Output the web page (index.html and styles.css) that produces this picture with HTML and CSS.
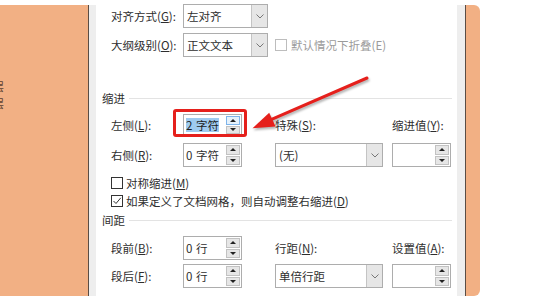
FILE: index.html
```html
<!DOCTYPE html>
<html lang="zh-CN">
<head>
<meta charset="utf-8">
<title>段落</title>
<link rel="stylesheet" href="styles.css">
</head>
<body>
<div class="screen">
  <div class="panel-left">
    <div class="doc-line">层</div>
    <div class="doc-line">层</div>
  </div>
  <div class="edge"></div>
  <div class="frame"></div>
  <div class="dialog">
    <div class="grid grid-top">
      <div class="label">对齐方式(<u>G</u>):</div>
      <div class="combo combo-short"><span class="combo-val">左对齐</span><span class="combo-btn"><svg width="8" height="5" viewBox="0 0 8 5"><polyline points="0.5,0.5 4,4 7.5,0.5" fill="none" stroke="#777" stroke-width="1"/></svg></span></div>
      <div></div><div></div>
      <div class="label">大纲级别(<u>O</u>):</div>
      <div class="combo combo-short"><span class="combo-val">正文文本</span><span class="combo-btn"><svg width="8" height="5" viewBox="0 0 8 5"><polyline points="0.5,0.5 4,4 7.5,0.5" fill="none" stroke="#777" stroke-width="1"/></svg></span></div>
      <div class="check-row span-2 disabled"><span class="check"></span><span>默认情况下折叠(E)</span></div>
    </div>

    <div class="section-head head-indent"><span>缩进</span></div>

    <div class="grid grid-indent">
      <div class="label">左侧(<u>L</u>):</div>
      <div class="spin">
        <span class="spin-val"><span class="selected">2 字符</span></span>
        <span class="spin-btns"><span class="sb sb-active"><i class="tri-up"></i></span><span class="sb"><i class="tri-down"></i></span></span>
        <span class="mark-box"></span>
      </div>
      <div class="label">特殊(<u>S</u>):</div>
      <div class="label">缩进值(<u>Y</u>):</div>

      <div class="label">右侧(<u>R</u>):</div>
      <div class="spin">
        <span class="spin-val">0 字符</span>
        <span class="spin-btns"><span class="sb"><i class="tri-up"></i></span><span class="sb"><i class="tri-down"></i></span></span>
      </div>
      <div class="combo combo-wide"><span class="combo-val">(无)</span><span class="combo-btn"><svg width="8" height="5" viewBox="0 0 8 5"><polyline points="0.5,0.5 4,4 7.5,0.5" fill="none" stroke="#777" stroke-width="1"/></svg></span></div>
      <div class="spin">
        <span class="spin-val"></span>
        <span class="spin-btns"><span class="sb"><i class="tri-up"></i></span><span class="sb"><i class="tri-down"></i></span></span>
      </div>

      <div class="check-row span-all row-mirror"><span class="check"></span><span>对称缩进(<u>M</u>)</span></div>
      <div class="check-row span-all row-grid"><span class="check"><svg width="10" height="10" viewBox="0 0 10 10"><polyline points="1.5,5 4,7.5 8.8,1.8" fill="none" stroke="#333" stroke-width="1"/></svg></span><span>如果定义了文档网格，则自动调整右缩进(<u>D</u>)</span></div>
    </div>

    <div class="section-head head-spacing"><span>间距</span></div>

    <div class="grid grid-spacing">
      <div class="label">段前(<u>B</u>):</div>
      <div class="spin">
        <span class="spin-val">0 行</span>
        <span class="spin-btns"><span class="sb"><i class="tri-up"></i></span><span class="sb"><i class="tri-down"></i></span></span>
      </div>
      <div class="label">行距(<u>N</u>):</div>
      <div class="label">设置值(<u>A</u>):</div>

      <div class="label">段后(<u>F</u>):</div>
      <div class="spin">
        <span class="spin-val">0 行</span>
        <span class="spin-btns"><span class="sb"><i class="tri-up"></i></span><span class="sb"><i class="tri-down"></i></span></span>
      </div>
      <div class="combo combo-wide"><span class="combo-val">单倍行距</span><span class="combo-btn"><svg width="8" height="5" viewBox="0 0 8 5"><polyline points="0.5,0.5 4,4 7.5,0.5" fill="none" stroke="#777" stroke-width="1"/></svg></span></div>
      <div class="spin">
        <span class="spin-val"></span>
        <span class="spin-btns"><span class="sb"><i class="tri-up"></i></span><span class="sb"><i class="tri-down"></i></span></span>
      </div>
    </div>
  </div>
  <div class="frame frame-right"></div>
  <div class="edge"></div>
  <div class="panel-right"></div>
</div>

<svg class="arrow" width="554" height="300" viewBox="0 0 554 300">
  <line x1="271" y1="119.6" x2="367" y2="78" stroke="#e5201c" stroke-width="3" stroke-linecap="round"/>
  <polygon points="252.5,128.3 269.2,112.8 275.6,126.6" fill="#e5201c"/>
</svg>
</body>
</html>
```

FILE: styles.css
```css
html, body {
  margin: 0;
  padding: 0;
}

body {
  width: 554px;
  height: 300px;
  overflow: hidden;
  background: #ffffff;
  font-family: "Noto Sans CJK SC", "Microsoft YaHei", "Liberation Sans", sans-serif;
  font-size: 11.5px;
  color: #2e2e2e;
  position: relative;
}

u {
  text-decoration: underline;
  text-underline-offset: 1px;
}

.screen {
  display: flex;
  height: 300px;
}

.panel-left {
  width: 88px;
  margin: 5px 0 4px;
  background: #f2b084;
  overflow: hidden;
  padding-top: 73px;
  box-sizing: border-box;
}

.doc-line {
  margin-left: -7px;
  font-size: 11px;
  line-height: 17px;
  color: #5c3f2f;
}

.edge {
  width: 1px;
  margin: 5px 0 4px;
  background: #5a4d45;
}

.frame {
  width: 7px;
  margin: 5px 0 4px;
  background: #eeeeee;
}

.frame-right {
  width: 8px;
}

.panel-right {
  width: 14px;
  margin: 5px 0 4px;
  background: #f2b084;
  border-radius: 0 6px 6px 0;
}

.dialog {
  width: 361px;
  padding: 4px 0 0 15px;
  box-sizing: border-box;
  background: #ffffff;
}

.grid {
  display: grid;
  grid-template-columns: 72px 92px 117px 59px;
}

.grid-top {
  grid-template-rows: 24px 24px;
  row-gap: 5px;
}

.grid-indent {
  margin-top: 8px;
  grid-template-rows: 22px 24px 12px 12px;
  row-gap: 7px;
}

.grid-indent .row-mirror {
  margin-top: 6px;
}

.grid-indent .row-grid {
  margin-top: 4px;
}

.grid-spacing {
  margin-top: 8px;
  grid-template-rows: 24px 24px;
  row-gap: 4px;
}

.label {
  display: flex;
  align-items: center;
  white-space: nowrap;
}

.section-head {
  display: flex;
  align-items: center;
  gap: 4px;
  height: 16px;
  margin: 0 5px 0 -9px;
  white-space: nowrap;
}

.section-head::after {
  content: "";
  flex: 1;
  height: 1px;
  background: #e3e3e3;
}

.head-indent {
  margin-top: 33px;
}

.head-spacing {
  margin-top: 7px;
}

/* combo boxes */
.combo {
  display: flex;
  align-items: stretch;
  border: 1px solid #adadad;
  box-sizing: border-box;
  background: #ffffff;
}

.combo-short {
  width: 85px;
}

.combo-wide {
  width: 108px;
}

.combo-val {
  flex: 1;
  display: flex;
  align-items: center;
  padding-left: 3px;
  white-space: nowrap;
}

.combo-btn {
  width: 15px;
  display: flex;
  align-items: center;
  justify-content: center;
  background: #e6e6e6;
  border-left: 1px solid #c4c4c4;
}

/* spinners */
.spin {
  position: relative;
  width: 59px;
  display: flex;
  align-items: stretch;
  border: 1px solid #adadad;
  box-sizing: border-box;
  background: #ffffff;
}

.spin-val {
  flex: 1;
  display: flex;
  align-items: center;
  padding-left: 2px;
  white-space: nowrap;
  word-spacing: 1px;
}

.selected {
  background: #9fcbf0;
  color: #1d1d1d;
  line-height: 14px;
}

.spin-btns {
  width: 15px;
  display: flex;
  flex-direction: column;
  gap: 1px;
  padding: 1px 1px 1px 0;
  box-sizing: border-box;
}

.sb {
  flex: 1;
  display: flex;
  align-items: center;
  justify-content: center;
  background: #e6e6e6;
  border: 1px solid #c2c2c2;
}

.sb-active {
  border-color: #7eb4ea;
  background: #e5f1fb;
}

.tri-up,
.tri-down {
  display: block;
  width: 0;
  height: 0;
  border-left: 3px solid transparent;
  border-right: 3px solid transparent;
}

.tri-up {
  border-bottom: 3px solid #222222;
}

.tri-down {
  border-top: 3px solid #222222;
}

.mark-box {
  position: absolute;
  left: -11px;
  top: -6px;
  width: 74px;
  height: 28px;
  border: 3px solid #e5201c;
  border-radius: 3px;
  box-sizing: border-box;
}

/* check boxes */
.check-row {
  display: flex;
  align-items: center;
  gap: 3px;
  white-space: nowrap;
}

.span-2 {
  grid-column: span 2;
  gap: 4px;
}

.span-all {
  grid-column: 1 / -1;
}

.check {
  width: 12px;
  height: 12px;
  border: 1px solid #333333;
  box-sizing: border-box;
  background: #ffffff;
  display: flex;
  align-items: center;
  justify-content: center;
  flex: none;
}

.disabled {
  color: #9b9b9b;
}

.disabled .check {
  border-color: #bdbdbd;
}

.arrow {
  position: absolute;
  left: 0;
  top: 0;
  pointer-events: none;
  filter: drop-shadow(1px 2px 1px rgba(0, 0, 0, 0.3));
}
```
